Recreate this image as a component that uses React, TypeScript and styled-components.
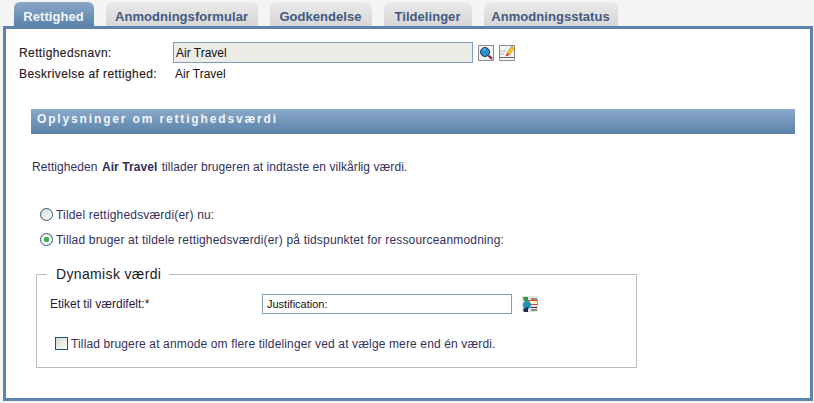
import React from 'react';
import styled, { createGlobalStyle } from 'styled-components';

const GlobalStyle = createGlobalStyle`
  html, body {
    margin: 0;
    padding: 0;
    background: #f4f4f4;
    font-family: "Liberation Sans", Arial, sans-serif;
    font-size: 12px;
    overflow: hidden;
  }
`;

const Page = styled.div`
  width: 814px;
  height: 403px;
  box-sizing: border-box;
  padding: 2px 1px 2px 3px;
  display: flex;
  flex-direction: column;
`;

const TabBar = styled.div`
  display: flex;
  gap: 12px;
  height: 24px;
  padding-left: 11px;
`;

const Tab = styled.div<{ $active?: boolean; $width: number }>`
  width: ${(p) => p.$width}px;
  box-sizing: border-box;
  border-radius: 6px 6px 0 0;
  padding-right: 1px;
  text-align: center;
  font-size: 13px;
  font-weight: bold;
  letter-spacing: 0.05px;
  line-height: 29px;
  height: 24px;
  color: ${(p) => (p.$active ? '#f2f6fa' : '#445a80')};
  background: ${(p) =>
    p.$active
      ? 'linear-gradient(#89a8c8, #5a82aa)'
      : 'linear-gradient(#eaeaea, #d6d6d6)'};
`;

const Panel = styled.div`
  flex: 1;
  box-sizing: border-box;
  border: 3px solid #5b83ac;
  background: #fff;
  padding: 13px 15px 0 13px;
  color: #1c1c1c;
`;

const FieldRow = styled.div`
  display: flex;
  align-items: center;
  height: 21px;
`;

const DescRow = styled(FieldRow)`
  margin-top: 1px;
  height: 20px;
`;

const FieldLabel = styled.div`
  width: 154px;
  color: #2a1a20;
  letter-spacing: 0.4px;
  -webkit-text-stroke: 0.15px #2a1a20;
`;

const ReadOnlyInput = styled.div`
  width: 300px;
  height: 21px;
  box-sizing: border-box;
  border: 1px solid #7f9db9;
  background: #ecebe6;
  padding-left: 2px;
  line-height: 20px;
  color: #111;
`;

const IconButton = styled.svg`
  display: block;
  width: 16px;
  height: 16px;
  margin-left: 5px;
`;

const ListGlyph = styled(IconButton)`
  margin-left: 10px;
`;

const DescValue = styled.div`
  padding-left: 2px;
  color: #111;
`;

const SectionBar = styled.div`
  margin: 25px 0 0 12px;
  width: 764px;
  height: 25px;
  box-sizing: border-box;
  padding: 3px 0 0 6px;
  background: linear-gradient(#8aa9c9, #5a82aa);
  color: #f0f4f8;
  font-size: 12px;
  font-weight: bold;
  letter-spacing: 1.85px;
  line-height: 14px;
`;

const Intro = styled.div`
  margin: 25px 0 0 13px;
  color: #33305c;
  line-height: 16px;
  letter-spacing: 0.07px;
  strong {
    margin: 0 1px;
  }
`;

const RadioGroup = styled.div`
  margin: 32px 0 0 21px;
  display: flex;
  flex-direction: column;
  gap: 10px;
`;

const RadioRow = styled.div`
  display: flex;
  align-items: center;
  height: 15px;
  color: #33305c;
  letter-spacing: 0.18px;
`;

const Radio = styled.span<{ $checked?: boolean }>`
  width: 13px;
  height: 13px;
  box-sizing: border-box;
  margin-right: 3px;
  border-radius: 50%;
  border: 1px solid #2f5a80;
  background: ${(p) =>
    p.$checked
      ? 'radial-gradient(circle, #3fae4a 0 2.4px, #f2f2ee 3px)'
      : 'linear-gradient(135deg, #d8d8d2, #fbfbf9)'};
`;

const Fieldset = styled.fieldset`
  margin: 19px 0 0 17px;
  width: 601px;
  height: 102px;
  box-sizing: border-box;
  padding: 0 0 0 13px;
  border: 1px solid #bcbcbc;
  border-width: 1px;
`;

const Legend = styled.legend`
  margin-left: -3px;
  padding: 0 8px 0 9px;
  font-size: 14px;
  letter-spacing: 0.35px;
  line-height: 16px;
  color: #1a1a1a;
`;

const ValueRow = styled.div`
  display: flex;
  align-items: center;
  margin-top: 12px;
  height: 20px;
`;

const ValueLabel = styled.div`
  width: 212px;
  color: #2a1a40;
`;

const TextInput = styled.div`
  width: 250px;
  height: 20px;
  box-sizing: border-box;
  border: 1px solid #7f9db9;
  background: #fff;
  padding: 1px 0 0 4px;
  font-size: 11px;
  line-height: 17px;
  color: #111;
`;

const CheckRow = styled.div`
  display: flex;
  align-items: center;
  margin: 22px 0 0 5px;
  height: 15px;
  color: #33305c;
  letter-spacing: 0.14px;
`;

const CheckBox = styled.span`
  width: 13px;
  height: 13px;
  box-sizing: border-box;
  margin-right: 3px;
  border: 1px solid #1c5180;
  background: linear-gradient(135deg, #d8d8d2, #fbfbf9);
`;

const SearchIcon = () => (
  <IconButton viewBox="0 0 16 16">
    <rect x="0.5" y="0.5" width="15" height="15" fill="#f2f2f0" stroke="#8c8c8c" />
    <circle cx="7" cy="7" r="4.5" fill="#2f8fc8" stroke="#123a5c" />
    <path d="M5 5.5 A2.5 2.5 0 0 1 7.5 4" stroke="#a8dcf4" fill="none" />
    <path d="M10.5 10.5 L14 14" stroke="#8a1020" strokeWidth="2" />
  </IconButton>
);

const EditIcon = () => (
  <IconButton viewBox="0 0 16 16">
    <rect x="0.5" y="0.5" width="15" height="15" fill="#f4f4f2" stroke="#8c8c8c" />
    <path d="M1 6 H7 M1 9 H5" stroke="#d4d4d4" strokeWidth="2" />
    <path d="M1 12.5 H15" stroke="#666" />
    <path d="M8 8 L13 1 L15.5 3 L10.5 10 Z" fill="#f4c82e" stroke="#a8841a" strokeWidth="0.6" />
    <path d="M6.5 11.5 L8 8 L10.5 10 Z" fill="#e0303c" />
  </IconButton>
);

const ListIcon = () => (
  <ListGlyph viewBox="0 0 16 16">
    <rect x="0" y="0" width="16" height="16" fill="#e4e4e0" />
    <path d="M9 3 H15 M9 11.5 H15 M9 14 H15" stroke="#333" />
    <rect x="6" y="4.5" width="10" height="4" fill="#fbf3c0" stroke="#e0483a" />
    <circle cx="5" cy="9" r="4" fill="#1f8fb0" />
    <path d="M1 1 L6 1 L6 5 L2 5 Z" fill="#2a9a3a" />
    <path d="M1 13 L6 11 L6 16 L2 16 Z" fill="#1c2a50" />
  </ListGlyph>
);

export default function App() {
  return (
    <>
      <GlobalStyle />
      <Page>
        <TabBar>
          <Tab $active $width={80}>Rettighed</Tab>
          <Tab $width={152}>Anmodningsformular</Tab>
          <Tab $width={102}>Godkendelse</Tab>
          <Tab $width={88}>Tildelinger</Tab>
          <Tab $width={134}>Anmodningsstatus</Tab>
        </TabBar>
        <Panel>
          <FieldRow>
            <FieldLabel>Rettighedsnavn:</FieldLabel>
            <ReadOnlyInput>Air Travel</ReadOnlyInput>
            <SearchIcon />
            <EditIcon />
          </FieldRow>
          <DescRow>
            <FieldLabel>Beskrivelse af rettighed:</FieldLabel>
            <DescValue>Air Travel</DescValue>
          </DescRow>
          <SectionBar>Oplysninger om rettighedsværdi</SectionBar>
          <Intro>
            Rettigheden <strong>Air Travel</strong> tillader brugeren at indtaste en vilkårlig værdi.
          </Intro>
          <RadioGroup>
            <RadioRow>
              <Radio />
              Tildel rettighedsværdi(er) nu:
            </RadioRow>
            <RadioRow>
              <Radio $checked />
              Tillad bruger at tildele rettighedsværdi(er) på tidspunktet for ressourceanmodning:
            </RadioRow>
          </RadioGroup>
          <Fieldset>
            <Legend>Dynamisk værdi</Legend>
            <ValueRow>
              <ValueLabel>Etiket til værdifelt:*</ValueLabel>
              <TextInput>Justification:</TextInput>
              <ListIcon />
            </ValueRow>
            <CheckRow>
              <CheckBox />
              Tillad brugere at anmode om flere tildelinger ved at vælge mere end én værdi.
            </CheckRow>
          </Fieldset>
        </Panel>
      </Page>
    </>
  );
}
